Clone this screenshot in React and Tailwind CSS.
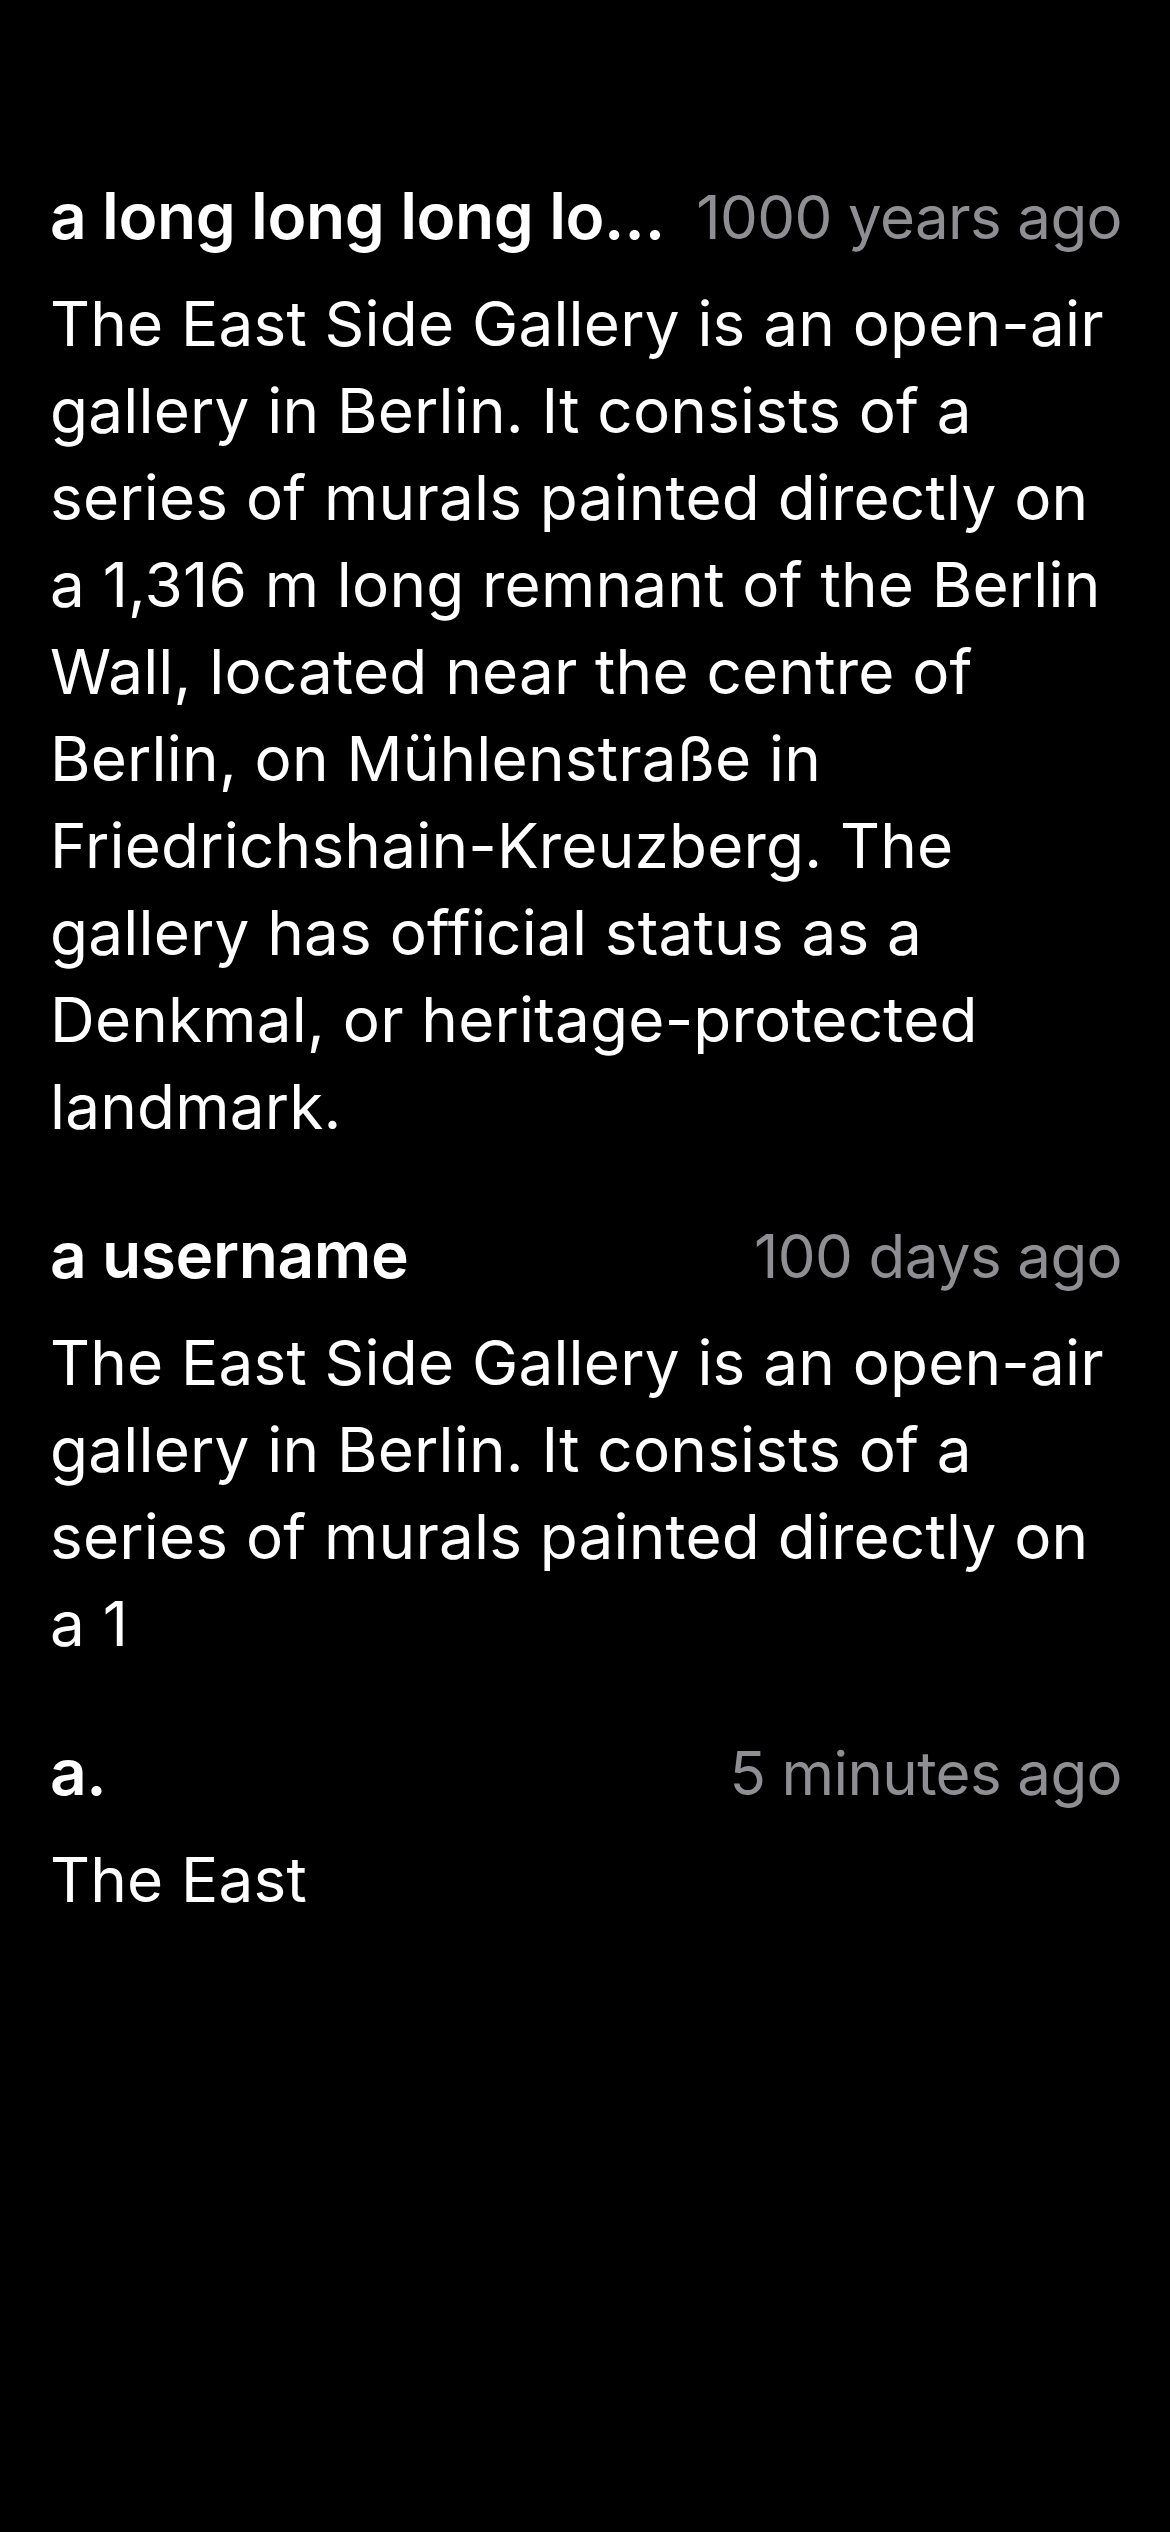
import React from "react";

const items = [
  {
    name: "a long long long lo…",
    time: "1000 years ago",
    lines: [
      "The East Side Gallery is an open-air",
      "gallery in Berlin. It consists of a",
      "series of murals painted directly on",
      "a 1,316 m long remnant of the Berlin",
      "Wall, located near the centre of",
      "Berlin, on Mühlenstraße in",
      "Friedrichshain-Kreuzberg. The",
      "gallery has official status as a",
      "Denkmal, or heritage-protected",
      "landmark.",
    ],
  },
  {
    name: "a username",
    time: "100 days ago",
    lines: [
      "The East Side Gallery is an open-air",
      "gallery in Berlin. It consists of a",
      "series of murals painted directly on",
      "a 1",
    ],
  },
  {
    name: "a.",
    time: "5 minutes ago",
    lines: ["The East"],
  },
];

export default function App() {
  return (
    <div
      className="min-h-[2532px] w-[1170px] bg-black text-white"
      style={{ fontFamily: "Inter, 'Noto Sans', sans-serif" }}
    >
      <div className="flex flex-col gap-[65px] pl-[50px] pr-[48px] pt-[176px]">
        {items.map((it, i) => (
          <div key={i} className="flex flex-col">
            <div className="flex items-baseline justify-between gap-[16px] leading-[80px]">
              <span className="whitespace-nowrap text-[64px] font-semibold tracking-[-0.4px]">
                {it.name}
              </span>
              <span className="shrink-0 whitespace-nowrap text-[60px] tracking-[-0.6px] text-[#8e8e93]">
                {it.time}
              </span>
            </div>
            <p className="mt-[23px] text-[62px] leading-[87px] tracking-[0.2px]">
              {it.lines.map((l, j) => (
                <React.Fragment key={j}>
                  {l}
                  {j < it.lines.length - 1 && <br />}
                </React.Fragment>
              ))}
            </p>
          </div>
        ))}
      </div>
    </div>
  );
}
